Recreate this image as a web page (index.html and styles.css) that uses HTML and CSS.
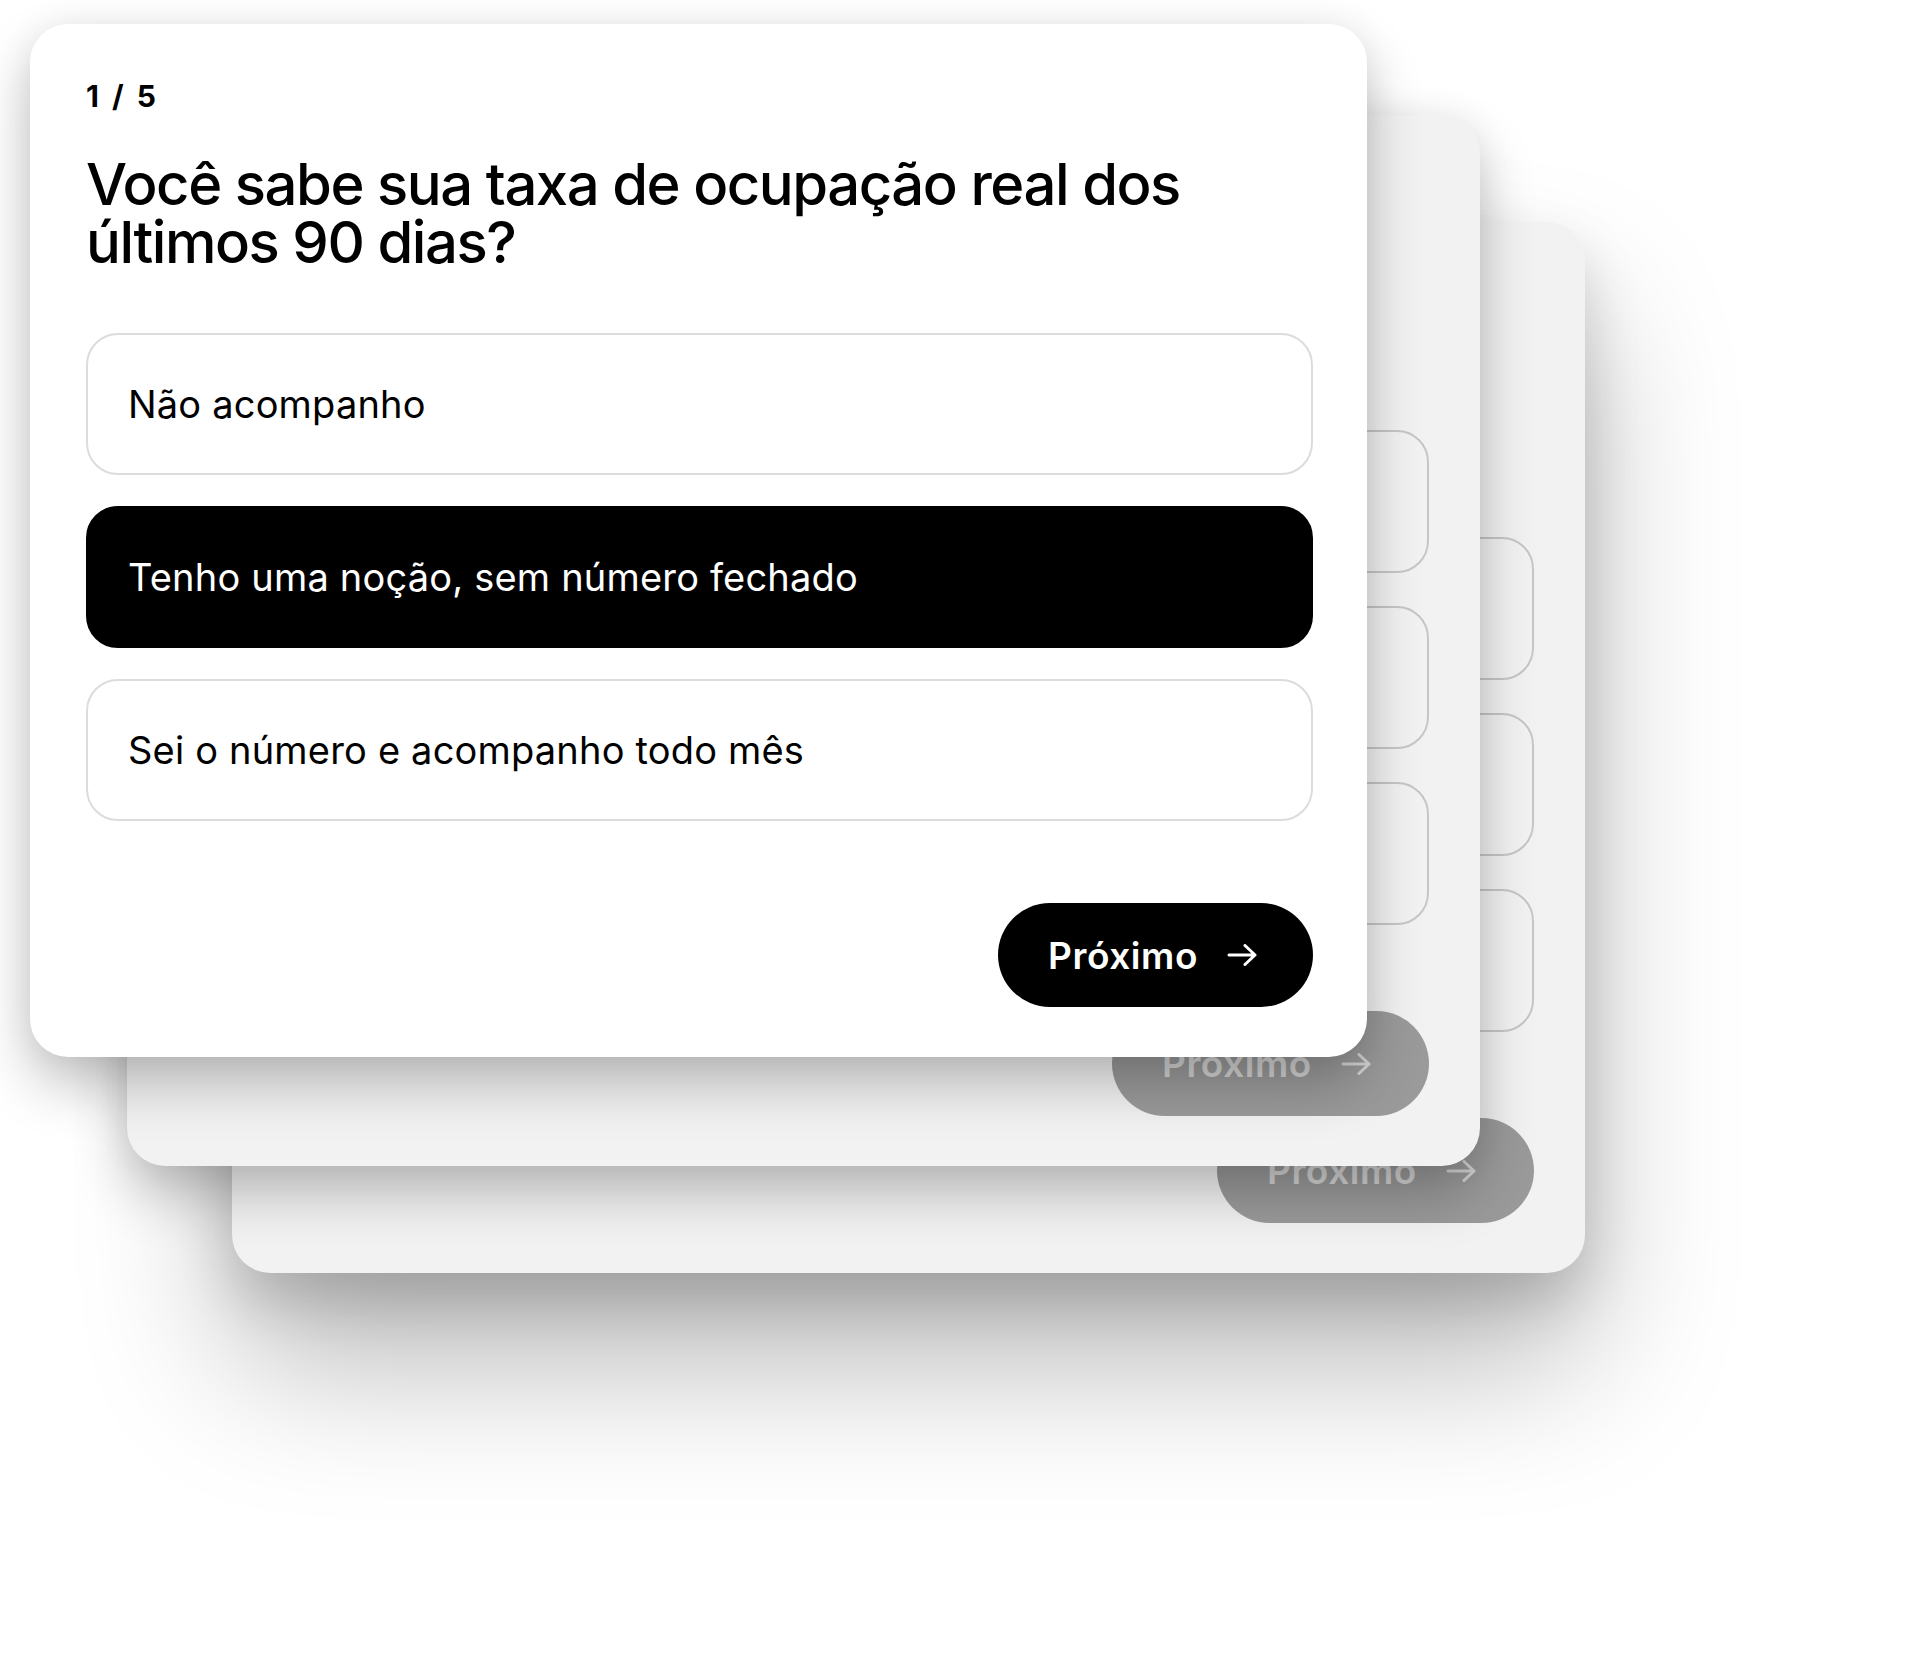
FILE: index.html
```html
<!DOCTYPE html>
<html lang="pt-BR">
<head>
    <meta charset="UTF-8">
    <meta name="viewport" content="width=device-width, initial-scale=1.0">
    <title>Diagnóstico de ocupação</title>
    <link rel="stylesheet" href="styles.css">
</head>
<body>
    <div class="deck">
        <!-- next questions, stacked behind the current one -->
        <div class="card card-queued card-third" aria-hidden="true">
            <div class="options">
                <div class="option"></div>
                <div class="option"></div>
                <div class="option"></div>
            </div>
            <div class="card-footer">
                <span class="next-btn">
                    Próximo
                    <svg class="arrow" viewBox="0 0 30 22" fill="none" stroke="currentColor" stroke-width="3" stroke-linecap="round" stroke-linejoin="round"><path d="M2 11h26M18 1.5l10 9.5-10 9.5"/></svg>
                </span>
            </div>
        </div>

        <div class="card card-queued card-second" aria-hidden="true">
            <div class="options">
                <div class="option"></div>
                <div class="option"></div>
                <div class="option"></div>
            </div>
            <div class="card-footer">
                <span class="next-btn">
                    Próximo
                    <svg class="arrow" viewBox="0 0 30 22" fill="none" stroke="currentColor" stroke-width="3" stroke-linecap="round" stroke-linejoin="round"><path d="M2 11h26M18 1.5l10 9.5-10 9.5"/></svg>
                </span>
            </div>
        </div>

        <div class="card card-current">
            <div class="step">1 / 5</div>
            <h1 class="question">Você sabe sua taxa de ocupação real dos últimos 90 dias?</h1>

            <div class="options">
                <button class="option">Não acompanho</button>
                <button class="option selected">Tenho uma noção, sem número fechado</button>
                <button class="option">Sei o número e acompanho todo mês</button>
            </div>

            <div class="card-footer">
                <button class="next-btn">
                    Próximo
                    <svg class="arrow" viewBox="0 0 30 22" fill="none" stroke="currentColor" stroke-width="3" stroke-linecap="round" stroke-linejoin="round"><path d="M2 11h26M18 1.5l10 9.5-10 9.5"/></svg>
                </button>
            </div>
        </div>
    </div>
</body>
</html>
```

FILE: styles.css
```css
* {
    margin: 0;
    padding: 0;
    box-sizing: border-box;
}

body {
    background-color: #fff;
    color: #000;
    font-family: Inter, "Liberation Sans", sans-serif;
}

.deck {
    position: relative;
    width: 1920px;
    height: 1653px;
    padding: 24px 0 0 30px;
}

.card {
    display: flex;
    flex-direction: column;
    width: 1337px;
    height: 1033px;
    padding: 54px 54px 50px 56px;
    background-color: #fff;
    border-radius: 38px;
    box-shadow: 0 28px 56px rgba(0, 0, 0, 0.24), 0 0 36px rgba(0, 0, 0, 0.06);
}

.card-current {
    position: relative;
    z-index: 3;
}

/* queued cards sit behind, slightly larger and greyed out */
.card-queued {
    position: absolute;
    width: 1353px;
    height: 1051px;
    padding: 315px 51px 50px 56px;
    background-color: #f2f2f2;
}

.card-second {
    left: 127px;
    top: 115px;
    z-index: 2;
}

.card-third {
    left: 232px;
    top: 222px;
    z-index: 1;
    box-shadow: 0 90px 150px rgba(0, 0, 0, 0.28), 0 28px 56px rgba(0, 0, 0, 0.16);
}

.step {
    font-size: 30px;
    font-weight: 700;
    line-height: 36px;
    letter-spacing: 0.1em;
}

.question {
    margin-top: 41px;
    font-size: 58px;
    font-weight: 500;
    line-height: 58px;
    letter-spacing: -0.025em;
}

.options {
    display: flex;
    flex-direction: column;
    gap: 31px;
    margin-top: 62px;
}

.option {
    display: flex;
    align-items: center;
    height: 142px;
    padding: 0 40px;
    border: 2px solid #dcdcdc;
    border-radius: 32px;
    background-color: #fff;
    font-family: inherit;
    font-size: 38px;
    font-weight: 400;
    color: #000;
    text-align: left;
    letter-spacing: 0.005em;
    cursor: pointer;
}

.option.selected {
    background-color: #000;
    border-color: #000;
    color: #fff;
}

.card-queued .options {
    gap: 33px;
    margin-top: 0;
}

.card-queued .option {
    height: 143px;
    border-color: #c6c6c6;
    background-color: transparent;
}

.card-footer {
    display: flex;
    justify-content: flex-end;
    margin-top: auto;
}

.next-btn {
    display: flex;
    align-items: center;
    gap: 29px;
    height: 104px;
    padding: 0 56px 0 50px;
    border: none;
    border-radius: 999px;
    background-color: #000;
    color: #fff;
    font-family: inherit;
    font-size: 37px;
    font-weight: 600;
    letter-spacing: 0.015em;
    cursor: pointer;
}

.card-queued .next-btn {
    width: 317px;
    height: 105px;
    background-color: #9a9a9a;
    color: #d4d4d4;
}

.arrow {
    width: 30px;
    height: 22px;
}
```
